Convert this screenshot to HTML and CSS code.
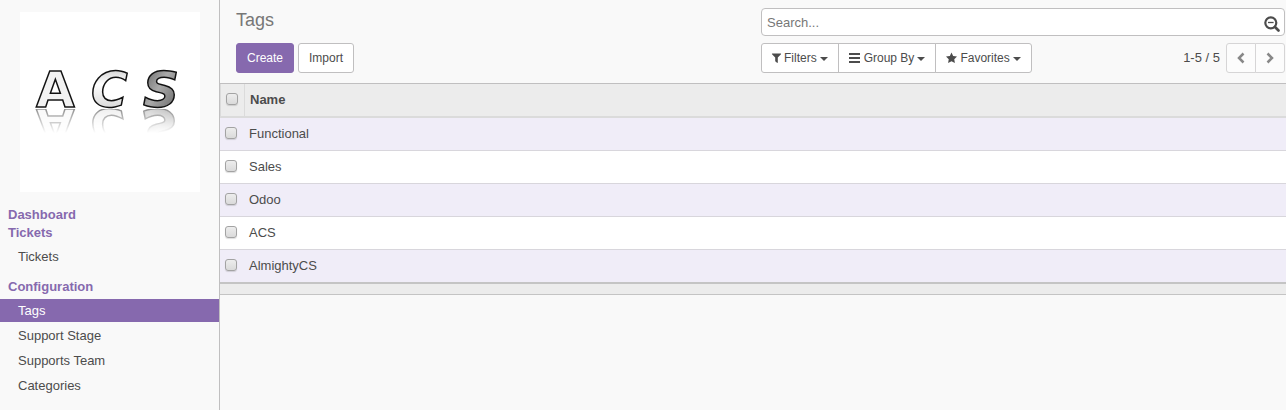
FILE: index.html
```html
<!DOCTYPE html>
<html lang="en">
<head>
<meta charset="utf-8">
<meta name="viewport" content="width=device-width, initial-scale=1">
<title>Tags</title>
<link rel="stylesheet" href="styles.css">
</head>
<body>
<div class="app">
  <aside class="sidebar">
    <svg class="logo" viewBox="0 0 180 180" role="img" aria-label="ACS">
      <defs>
        <linearGradient id="silver" x1="0" y1="0" x2="0" y2="1">
          <stop offset="0" stop-color="#bbb"/><stop offset=".4" stop-color="#fff"/><stop offset="1" stop-color="#c8c8c8"/>
        </linearGradient>
        <linearGradient id="steel" x1="0" y1="0" x2="1" y2="1">
          <stop offset="0" stop-color="#555"/><stop offset=".45" stop-color="#aaa"/><stop offset="1" stop-color="#555"/>
        </linearGradient>
        <linearGradient id="fade" x1="0" y1="0" x2="0" y2="1">
          <stop offset="0" stop-color="#777"/><stop offset="1" stop-color="#000"/>
        </linearGradient>
        <mask id="mirror" maskUnits="userSpaceOnUse" x="0" y="97" width="180" height="24">
          <rect x="0" y="97" width="180" height="24" fill="url(#fade)"/>
        </mask>
        <g id="mark" class="mark">
          <text class="upright" x="16" y="95" fill="#f2f2f2">A</text>
          <text x="71" y="95" fill="url(#silver)">C</text>
          <text x="123" y="95" fill="url(#steel)">S</text>
        </g>
      </defs>
      <rect width="180" height="180" fill="#fff"/>
      <use href="#mark"/>
      <g mask="url(#mirror)"><use href="#mark" transform="translate(0 192) scale(1 -1)"/></g>
    </svg>
    <nav class="menu">
      <a class="menu-title" href="#">Dashboard</a>
      <a class="menu-title" href="#">Tickets</a>
      <ul class="menu-list">
        <li><a class="menu-item" href="#">Tickets</a></li>
      </ul>
      <a class="menu-title" href="#">Configuration</a>
      <ul class="menu-list">
        <li><a class="menu-item active" href="#" aria-current="page">Tags</a></li>
        <li><a class="menu-item" href="#">Support Stage</a></li>
        <li><a class="menu-item" href="#">Supports Team</a></li>
        <li><a class="menu-item" href="#">Categories</a></li>
      </ul>
    </nav>
  </aside>
  <main class="content">
    <header class="panel">
      <h1 class="title">Tags</h1>
      <div class="search">
        <input class="search-input" type="text" placeholder="Search..." aria-label="Search">
        <button class="search-more" type="button" aria-label="Advanced search">
          <svg width="16" height="16" viewBox="0 0 16 16" fill="none" stroke="currentColor"><circle cx="6.800" cy="6.800" r="5.500" stroke-width="2.200"/><path d="M11 11l3.500 3.500" stroke-width="2.600" stroke-linecap="round"/><path d="M4 6.500h5.600" stroke-width="1.300"/></svg>
        </button>
      </div>
      <div class="actions">
        <button class="btn primary" type="button">Create</button>
        <button class="btn" type="button">Import</button>
      </div>
      <div class="tools">
        <div class="group">
          <button class="btn filter" type="button"><svg width="9" height="12" viewBox="0 0 9 12"><path d="M.2 1.500h8.600q.5.200.2.700L5.800 5.600v5q-.2.600-.8.200L3.200 9.200V5.600L0 2.200q-.3-.5.2-.7z"/></svg>Filters<span class="caret"></span></button>
          <button class="btn filter" type="button"><svg width="12" height="12" viewBox="0 0 12 12"><path d="M0 1h11v2H0zM0 5h11v2H0zM0 9h11v2H0z"/></svg>Group By<span class="caret"></span></button>
          <button class="btn filter" type="button"><svg width="11" height="12" viewBox="0 0 12 12"><path d="M6 0l1.800 3.800 4.200.6-3 2.900.7 4.200L6 9.500l-3.700 2 .7-4.200-3-2.900 4.200-.6z"/></svg>Favorites<span class="caret"></span></button>
        </div>
        <div class="pager">
          <span>1-5 / 5</span>
          <div class="group pages">
            <button class="btn page" type="button" aria-label="Previous"><svg width="8" height="12" viewBox="0 0 8 12"><path class="arrow" d="M6.500 1.500L2 6l4.500 4.500"/></svg></button>
            <button class="btn page" type="button" aria-label="Next"><svg width="8" height="12" viewBox="0 0 8 12"><path class="arrow" d="M1.500 1.500L6 6l-4.500 4.500"/></svg></button>
          </div>
        </div>
      </div>
    </header>
    <table class="list">
      <thead>
        <tr><th class="pick"><input class="check" type="checkbox" aria-label="Select all"></th><th>Name</th></tr>
      </thead>
      <tbody>
        <tr><td class="pick"><input class="check" id="t1" type="checkbox"></td><td><label for="t1">Functional</label></td></tr>
        <tr><td class="pick"><input class="check" id="t2" type="checkbox"></td><td><label for="t2">Sales</label></td></tr>
        <tr><td class="pick"><input class="check" id="t3" type="checkbox"></td><td><label for="t3">Odoo</label></td></tr>
        <tr><td class="pick"><input class="check" id="t4" type="checkbox"></td><td><label for="t4">ACS</label></td></tr>
        <tr><td class="pick"><input class="check" id="t5" type="checkbox"></td><td><label for="t5">AlmightyCS</label></td></tr>
      </tbody>
      <tfoot>
        <tr><td colspan="2"></td></tr>
      </tfoot>
    </table>
  </main>
</div>
</body>
</html>
```
FILE: styles.css
```css
* { box-sizing: border-box; }
body {
  margin: 0;
  background: #f9f9f9;
  color: #4c4c4c;
  font: 13px/18px "Liberation Sans", Arial, sans-serif;
}
button, input { font: inherit; color: inherit; margin: 0; }
a { color: inherit; text-decoration: none; }

.app { display: flex; min-height: 100vh; }
.sidebar {
  flex: 0 0 220px;
  padding-top: 12px;
  border-right: 1px solid #c0bfc0;
}
.logo { display: block; width: 180px; height: 180px; margin: 0 0 14px 20px; }
.mark {
  font: italic bold 50px "DejaVu Sans", sans-serif;
  stroke: #111;
  stroke-width: 1.5px;
}
.upright { font-style: normal; }
.menu-title { display: block; padding-left: 8px; color: #8669ae; font-weight: bold; }
.menu-list {
  display: flex;
  flex-direction: column;
  gap: 2px;
  margin: 3px 0 10px;
  padding: 0;
  list-style: none;
}
.menu-item { display: block; padding: 3px 18px 2px; }
.menu-item.active { background: #8669ae; color: #fff; }

.content { flex: 1; min-width: 0; }
.panel {
  display: grid;
  grid-template-columns: 1fr 1fr;
  gap: 7px 1px;
  padding: 8px 1px 10px 16px;
  border-bottom: 1px solid #c0bfc0;
}
.title { margin: 0; color: #777; font-size: 18px; font-weight: normal; line-height: 24px; }
.search {
  display: flex;
  align-items: center;
  height: 28px;
  padding: 0 4px;
  border: 1px solid #c0bfc0;
  border-radius: 4px;
  background: #fff;
}
.search-input { flex: 1; min-width: 0; border: 0; padding: 2px 0 0 1px; outline: 0; background: none; }
.search-input::placeholder { color: #777; opacity: 1; }
.search-more { display: flex; padding: 3px 0 0; border: 0; background: none; }
.actions, .group, .tools, .pager { display: flex; align-items: center; }
.actions { gap: 4px; }
.tools { justify-content: space-between; }
.pager { gap: 6px; }
.btn {
  display: inline-flex;
  align-items: center;
  height: 30px;
  padding: 0 10px;
  border: 1px solid #c0bfc0;
  border-radius: 3px;
  background: #fff;
  font-size: 12px;
}
.btn svg { fill: currentColor; overflow: visible; }
.primary { background: #8669ae; border-color: #8669ae; color: #fff; }
.filter { gap: 3px; }
.group .btn + .btn { margin-left: -1px; border-top-left-radius: 0; border-bottom-left-radius: 0; }
.group .btn:first-child { border-top-right-radius: 0; border-bottom-right-radius: 0; }
.group .btn:not(:first-child):not(:last-child) { border-radius: 0; }
.caret { border: 4px solid transparent; border-top-color: currentColor; border-bottom: 0; margin-top: 2px; }
.pages .btn { width: 30px; padding: 0; justify-content: center; border-color: #d6d5d6; background: #fcfcfc; color: #888; }
.arrow { fill: none; stroke: currentColor; stroke-width: 2.5; }

.list { width: 100%; border-collapse: separate; border-spacing: 0; }
.list th, .list td { height: 33px; padding: 0 4px; text-align: left; }
.list th { height: 34px; padding: 0 5px; background: #ececec; border-bottom: 2px solid #dbdbdb; }
.list .pick { width: 25px; padding: 0 0 2px 5px; }
.list th.pick { border-left: 1px solid #dbdbdb; border-right: 1px solid #dbdbdb; }
.list tbody td { background: #fff; border-bottom: 1px solid #d8d6dc; }
.list tbody tr:nth-child(odd) td { background: #f0edf8; }
.list tbody tr:last-child td { height: 34px; border-bottom: 2px solid #c4c4c4; }
.list tfoot td { height: 11px; padding: 0; background: #ececec; border-bottom: 1px solid #c4c4c4; }
.check {
  appearance: none;
  display: block;
  width: 12px;
  height: 12px;
  border: 1px solid #a3a3a3;
  border-radius: 3px;
  background: linear-gradient(#ededed, #dadada);
  box-shadow: 0 1px 1px #0002;
}
```
